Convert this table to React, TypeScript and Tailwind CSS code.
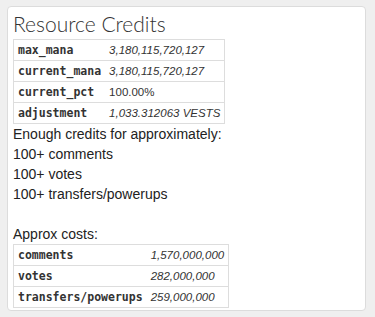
export default function App() {
  const sans = { fontFamily: '"Liberation Sans", Arial, sans-serif' };
  const t1: [string, string, boolean][] = [
    ["max_mana", "3,180,115,720,127", true],
    ["current_mana", "3,180,115,720,127", true],
    ["current_pct", "100.00%", false],
    ["adjustment", "1,033.312063 VESTS", true],
  ];
  const t2: [string, string][] = [
    ["comments", "1,570,000,000"],
    ["votes", "282,000,000"],
    ["transfers/powerups", "259,000,000"],
  ];
  const keyCls =
    "px-[4px] py-0 leading-[20px] text-[11.5px] font-bold text-[#333] font-['DejaVu_Sans_Mono',monospace] whitespace-nowrap text-left";
  const valCls = "px-[4px] py-0 leading-[20px] text-[11.5px] text-[#333] whitespace-nowrap text-left";
  return (
    <div className="w-[375px] h-[317px] bg-[#efefef] pt-[6px] pl-[7px]" style={sans}>
      <div className="w-[359px] h-[305px] bg-white border border-[#dcdcdc] rounded-[4px] pt-[5px] px-[5px]">
        <div className="text-[21px] leading-[24px] text-[#333] font-light font-['Lato',sans-serif]">
          Resource Credits
        </div>
        <table className="mt-[3px] border-collapse border border-[#ddd]">
          <tbody>
            {t1.map(([k, v, it]) => (
              <tr key={k} className="border-t border-[#ddd]">
                <td className={keyCls}>{k}</td>
                <td className={valCls + (it ? " italic" : "")}>{v}</td>
              </tr>
            ))}
          </tbody>
        </table>
        <div className="text-[14px] leading-[20px] text-[#222]">
          <div>Enough credits for approximately:</div>
          <div>100+ comments</div>
          <div>100+ votes</div>
          <div>100+ transfers/powerups</div>
          <div className="h-[20px]"></div>
          <div>Approx costs:</div>
        </div>
        <table className="border-collapse border border-[#ddd]">
          <tbody>
            {t2.map(([k, v]) => (
              <tr key={k} className="border-t border-[#ddd]">
                <td className={keyCls}>{k}</td>
                <td className={valCls + " italic"}>{v}</td>
              </tr>
            ))}
          </tbody>
        </table>
      </div>
    </div>
  );
}
